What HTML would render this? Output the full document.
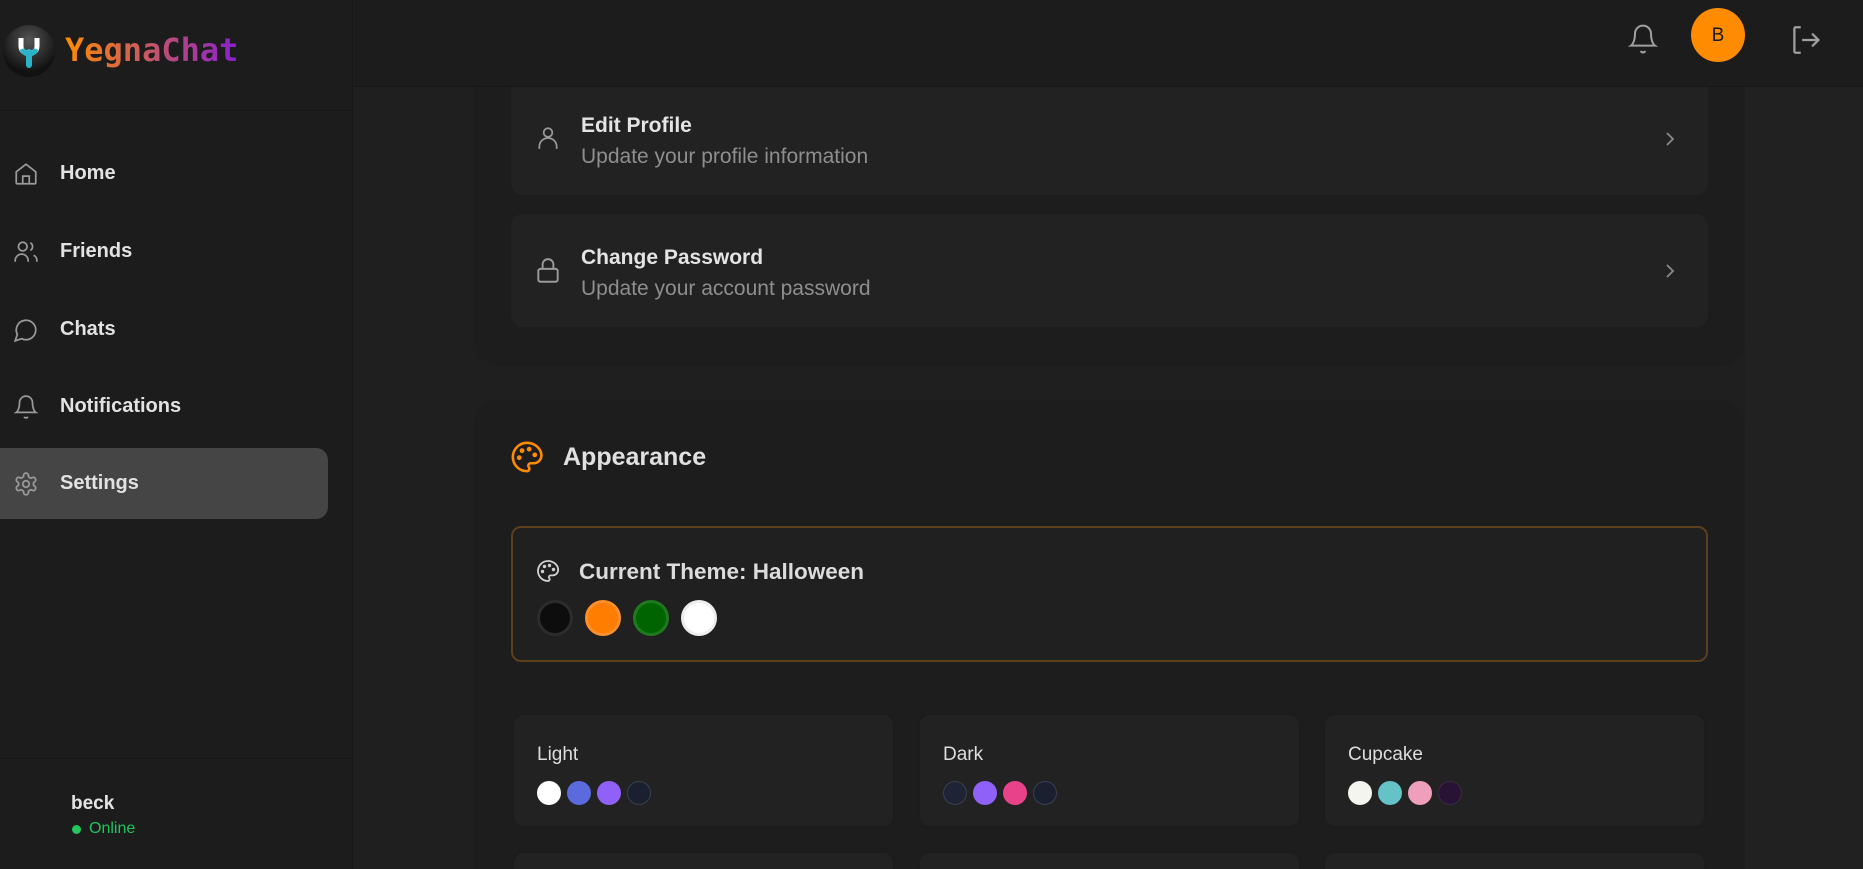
<!DOCTYPE html>
<html><head><meta charset="utf-8"><style>
*{box-sizing:border-box;margin:0;padding:0}
html,body{width:1863px;height:869px;overflow:hidden}
body{background:#1f1f1f;font-family:"Liberation Sans",sans-serif;color:#dcdcdc;position:relative}
#root{position:absolute;left:0;top:0;width:1863px;height:869px;overflow:hidden}
.abs{position:absolute}
svg{display:block}
.side{left:0;top:0;width:353px;height:869px;background:#1c1c1c;border-right:1px solid #171717}
.nav{left:0;width:328px;height:71px;display:flex;align-items:center;font-size:20px;font-weight:bold;color:#e2e2e2}
.nav svg{margin-left:13px;margin-right:21px}
.card{background:#222;border-radius:12px}
.t1{font-size:21px;font-weight:bold;color:#e4e4e4}
.t2{font-size:21px;color:#8e8e8e}
.dot{position:absolute;width:24px;height:24px;border-radius:50%}
.big{position:absolute;width:36px;height:36px;border-radius:50%;top:600px}
.tc{position:absolute;width:383px;height:115px;background:#222;border-radius:12px;border:2px solid #1c1c1c}
.tc .n{position:absolute;left:23px;top:29px;font-size:19px;color:#ddd}
</style></head><body><div id="root">
<div class="abs side">
  <div class="abs" style="left:3px;top:25px;width:52px;height:52px;border-radius:50%;background:radial-gradient(circle at 50% 30%,#555,#111 70%)"></div>
  <svg class="abs" style="left:15px;top:36px" width="28" height="32" viewBox="0 0 28 32"><path d="M6 2v8q0 7 8 7q8 0 8-7V2" fill="none" stroke="#fff" stroke-width="5"/><path d="M14 16v13" stroke="#2bb3c8" stroke-width="6" stroke-linecap="round"/><path d="M7 13q2 5 7 5q5 0 7-5" fill="none" stroke="#2bb3c8" stroke-width="5"/></svg>
  <div class="abs" style="left:65px;top:31px;font-family:'DejaVu Sans Mono','Liberation Mono',monospace;font-weight:bold;font-size:32px;background:linear-gradient(90deg,#ff8c00,#8a1fd0);-webkit-background-clip:text;color:transparent">YegnaChat</div>
  <div class="abs" style="left:0;top:110px;width:353px;height:1px;background:#171717"></div>
  <div class="abs nav" style="top:138px"><svg width="26" height="26" viewBox="0 0 24 24" fill="none" stroke="#9a9a9a" stroke-width="1.6"><path d="M3 10l9-7 9 7v10a1 1 0 0 1-1 1H4a1 1 0 0 1-1-1z"/><path d="M9 21v-7h6v7"/></svg>Home</div>
  <div class="abs nav" style="top:216px"><svg width="26" height="26" viewBox="0 0 24 24" fill="none" stroke="#9a9a9a" stroke-width="1.6"><circle cx="9" cy="7" r="4"/><path d="M2 21v-1a6 6 0 0 1 12 0v1"/><path d="M16 3.5a4 4 0 0 1 0 7M19 15a5 5 0 0 1 3 5v1"/></svg>Friends</div>
  <div class="abs nav" style="top:294px"><svg width="26" height="26" viewBox="0 0 24 24" fill="none" stroke="#9a9a9a" stroke-width="1.6"><path d="M7.9 20A9 9 0 1 0 4 16.1L2 22z"/></svg>Chats</div>
  <div class="abs nav" style="top:371px"><svg width="26" height="26" viewBox="0 0 24 24" fill="none" stroke="#9a9a9a" stroke-width="1.6"><path d="M6 8a6 6 0 0 1 12 0c0 7 3 9 3 9H3s3-2 3-9"/><path d="M10.3 21a1.9 1.9 0 0 0 3.4 0"/></svg>Notifications</div>
  <div class="abs nav" style="top:448px;background:#454545;border-radius:0 12px 12px 0"><svg width="26" height="26" viewBox="0 0 24 24" fill="none" stroke="#9a9a9a" stroke-width="1.6"><path d="M12.2 2h-.4a2 2 0 0 0-2 2v.2a2 2 0 0 1-1 1.7l-.4.3a2 2 0 0 1-2 0l-.2-.1a2 2 0 0 0-2.7.7l-.2.4a2 2 0 0 0 .7 2.7l.2.1a2 2 0 0 1 1 1.7v.5a2 2 0 0 1-1 1.7l-.2.1a2 2 0 0 0-.7 2.7l.2.4a2 2 0 0 0 2.7.7l.2-.1a2 2 0 0 1 2 0l.4.3a2 2 0 0 1 1 1.7v.2a2 2 0 0 0 2 2h.4a2 2 0 0 0 2-2v-.2a2 2 0 0 1 1-1.7l.4-.3a2 2 0 0 1 2 0l.2.1a2 2 0 0 0 2.7-.7l.2-.4a2 2 0 0 0-.7-2.7l-.2-.1a2 2 0 0 1-1-1.7v-.5a2 2 0 0 1 1-1.7l.2-.1a2 2 0 0 0 .7-2.7l-.2-.4a2 2 0 0 0-2.7-.7l-.2.1a2 2 0 0 1-2 0l-.4-.3a2 2 0 0 1-1-1.7V4a2 2 0 0 0-2-2z"/><circle cx="12" cy="12" r="3"/></svg>Settings</div>
  <div class="abs" style="left:0;top:758px;width:353px;height:1px;background:#171717"></div>
  <div class="abs" style="left:71px;top:793px;font-size:19px;font-weight:bold;color:#e4e4e4">beck</div>
  <div class="abs" style="left:72px;top:825px;width:9px;height:9px;border-radius:50%;background:#22c55e"></div>
  <div class="abs" style="left:89px;top:820px;font-size:16px;color:#22c55e">Online</div>
</div>
<div class="abs" style="left:1745px;top:87px;width:118px;height:782px;background:#212121"></div>
<div class="abs" style="left:474px;top:40px;width:1271px;height:326px;background:#1d1d1d;border-radius:26px"></div>
<div class="abs card" style="left:511px;top:70px;width:1197px;height:125px"></div>
<svg class="abs" style="left:535px;top:125px" width="26" height="26" viewBox="0 0 24 24" fill="none" stroke="#9a9a9a" stroke-width="1.6"><circle cx="12" cy="7" r="4"/><path d="M4 22v-2a6 6 0 0 1 16 0v2"/></svg>
<div class="abs t1" style="left:581px;top:114px">Edit Profile</div>
<div class="abs t2" style="left:581px;top:145px">Update your profile information</div>
<svg class="abs" style="left:1660px;top:129px" width="20" height="20" viewBox="0 0 20 20" fill="none" stroke="#8a8a8a" stroke-width="1.8"><path d="M7 4l6 6-6 6"/></svg>
<div class="abs card" style="left:511px;top:214px;width:1197px;height:113px"></div>
<svg class="abs" style="left:535px;top:257px" width="26" height="28" viewBox="0 0 24 26" fill="none" stroke="#9a9a9a" stroke-width="1.8"><rect x="3" y="11" width="18" height="12" rx="2"/><path d="M7 11V7a5 5 0 0 1 10 0v4"/></svg>
<div class="abs t1" style="left:581px;top:246px">Change Password</div>
<div class="abs t2" style="left:581px;top:277px">Update your account password</div>
<svg class="abs" style="left:1660px;top:261px" width="20" height="20" viewBox="0 0 20 20" fill="none" stroke="#8a8a8a" stroke-width="1.8"><path d="M7 4l6 6-6 6"/></svg>
<div class="abs" style="left:354px;top:0;width:1509px;height:87px;background:#1c1c1c;border-bottom:1px solid #171717"></div>
<svg class="abs" style="left:1627px;top:22px" width="32" height="34" viewBox="0 0 24 24" fill="none" stroke="#a0a0a0" stroke-width="1.5"><path d="M6 8a6 6 0 0 1 12 0c0 7 3 9 3 9H3s3-2 3-9"/><path d="M10.3 21a1.9 1.9 0 0 0 3.4 0"/></svg>
<div class="abs" style="left:1691px;top:8px;width:54px;height:54px;border-radius:50%;background:#ff8c00;color:#1a1a1a;font-size:19px;text-align:center;line-height:56px">B</div>
<svg class="abs" style="left:1788px;top:23px" width="34" height="34" viewBox="0 0 24 24" fill="none" stroke="#a0a0a0" stroke-width="1.6"><path d="M9 3H5.5a1 1 0 0 0-1 1v16a1 1 0 0 0 1 1H9"/><path d="M10 12h11M17 7.5l4.5 4.5-4.5 4.5"/></svg>
<div class="abs" style="left:474px;top:400px;width:1271px;height:469px;background:#1d1d1d;border-radius:26px 26px 0 0"></div>
<svg class="abs" style="left:510px;top:440px" width="34" height="34" viewBox="0 0 24 24" fill="none" stroke="#ff8c00" stroke-width="1.8"><path d="M12 2C6.5 2 2 6.5 2 12s4.5 10 10 10c.9 0 1.7-.8 1.7-1.7 0-.4-.2-.8-.4-1.1-.3-.3-.4-.7-.4-1.1 0-.9.8-1.7 1.7-1.7h2c3.1 0 5.6-2.5 5.6-5.6C22 6 17.5 2 12 2z"/><circle cx="13.5" cy="6.5" r=".8" fill="#ff8c00"/><circle cx="17.5" cy="10.5" r=".8" fill="#ff8c00"/><circle cx="8.5" cy="7.5" r=".8" fill="#ff8c00"/><circle cx="6.5" cy="12.5" r=".8" fill="#ff8c00"/></svg>
<div class="abs" style="left:563px;top:443px;font-size:25px;font-weight:bold;color:#e0e0e0">Appearance</div>
<div class="abs" style="left:511px;top:526px;width:1197px;height:136px;border:2px solid #5c3f1c;border-radius:10px;background:#202020"></div>
<svg class="abs" style="left:536px;top:559px" width="24" height="24" viewBox="0 0 24 24" fill="none" stroke="#d0d0d0" stroke-width="1.8"><path d="M12 2C6.5 2 2 6.5 2 12s4.5 10 10 10c.9 0 1.7-.8 1.7-1.7 0-.4-.2-.8-.4-1.1-.3-.3-.4-.7-.4-1.1 0-.9.8-1.7 1.7-1.7h2c3.1 0 5.6-2.5 5.6-5.6C22 6 17.5 2 12 2z"/><circle cx="13.5" cy="6.5" r=".8" fill="#d0d0d0"/><circle cx="17.5" cy="10.5" r=".8" fill="#d0d0d0"/><circle cx="8.5" cy="7.5" r=".8" fill="#d0d0d0"/><circle cx="6.5" cy="12.5" r=".8" fill="#d0d0d0"/></svg>
<div class="abs" style="left:579px;top:559px;font-size:22.5px;font-weight:bold;color:#dcdcdc">Current Theme: Halloween</div>
<div class="big" style="left:537px;background:#0d0d0d;border:3px solid #2c2c2c"></div>
<div class="big" style="left:585px;background:#ff7d00;border:3px solid #ff8f2a"></div>
<div class="big" style="left:633px;background:#006400;border:3px solid #1f7a1f"></div>
<div class="big" style="left:681px;background:#fff;border:3px solid #eee"></div>
<div class="tc" style="left:512px;top:713px"><div class="n">Light</div>
<div class="dot" style="left:23px;top:66px;background:#fff"></div><div class="dot" style="left:53px;top:66px;background:#5b6bde"></div><div class="dot" style="left:83px;top:66px;background:#9061f9"></div><div class="dot" style="left:113px;top:66px;background:#1a2030;border:1px solid #3a3f50"></div></div>
<div class="tc" style="left:918px;top:713px"><div class="n">Dark</div>
<div class="dot" style="left:23px;top:66px;background:#1e2435;border:1px solid #3a3f50"></div><div class="dot" style="left:53px;top:66px;background:#9061f9"></div><div class="dot" style="left:83px;top:66px;background:#e8438a"></div><div class="dot" style="left:113px;top:66px;background:#1a2030;border:1px solid #3a3f50"></div></div>
<div class="tc" style="left:1323px;top:713px"><div class="n">Cupcake</div>
<div class="dot" style="left:23px;top:66px;background:#f5f5f0"></div><div class="dot" style="left:53px;top:66px;background:#65c3c8"></div><div class="dot" style="left:83px;top:66px;background:#ef9fbc"></div><div class="dot" style="left:113px;top:66px;background:#291334;border:1px solid #3a2a45"></div></div>
<div class="tc" style="left:512px;top:851px;height:18px;border-radius:12px 12px 0 0;border-bottom:0"></div>
<div class="tc" style="left:918px;top:851px;height:18px;border-radius:12px 12px 0 0;border-bottom:0"></div>
<div class="tc" style="left:1323px;top:851px;height:18px;border-radius:12px 12px 0 0;border-bottom:0"></div>
</div></body></html>
